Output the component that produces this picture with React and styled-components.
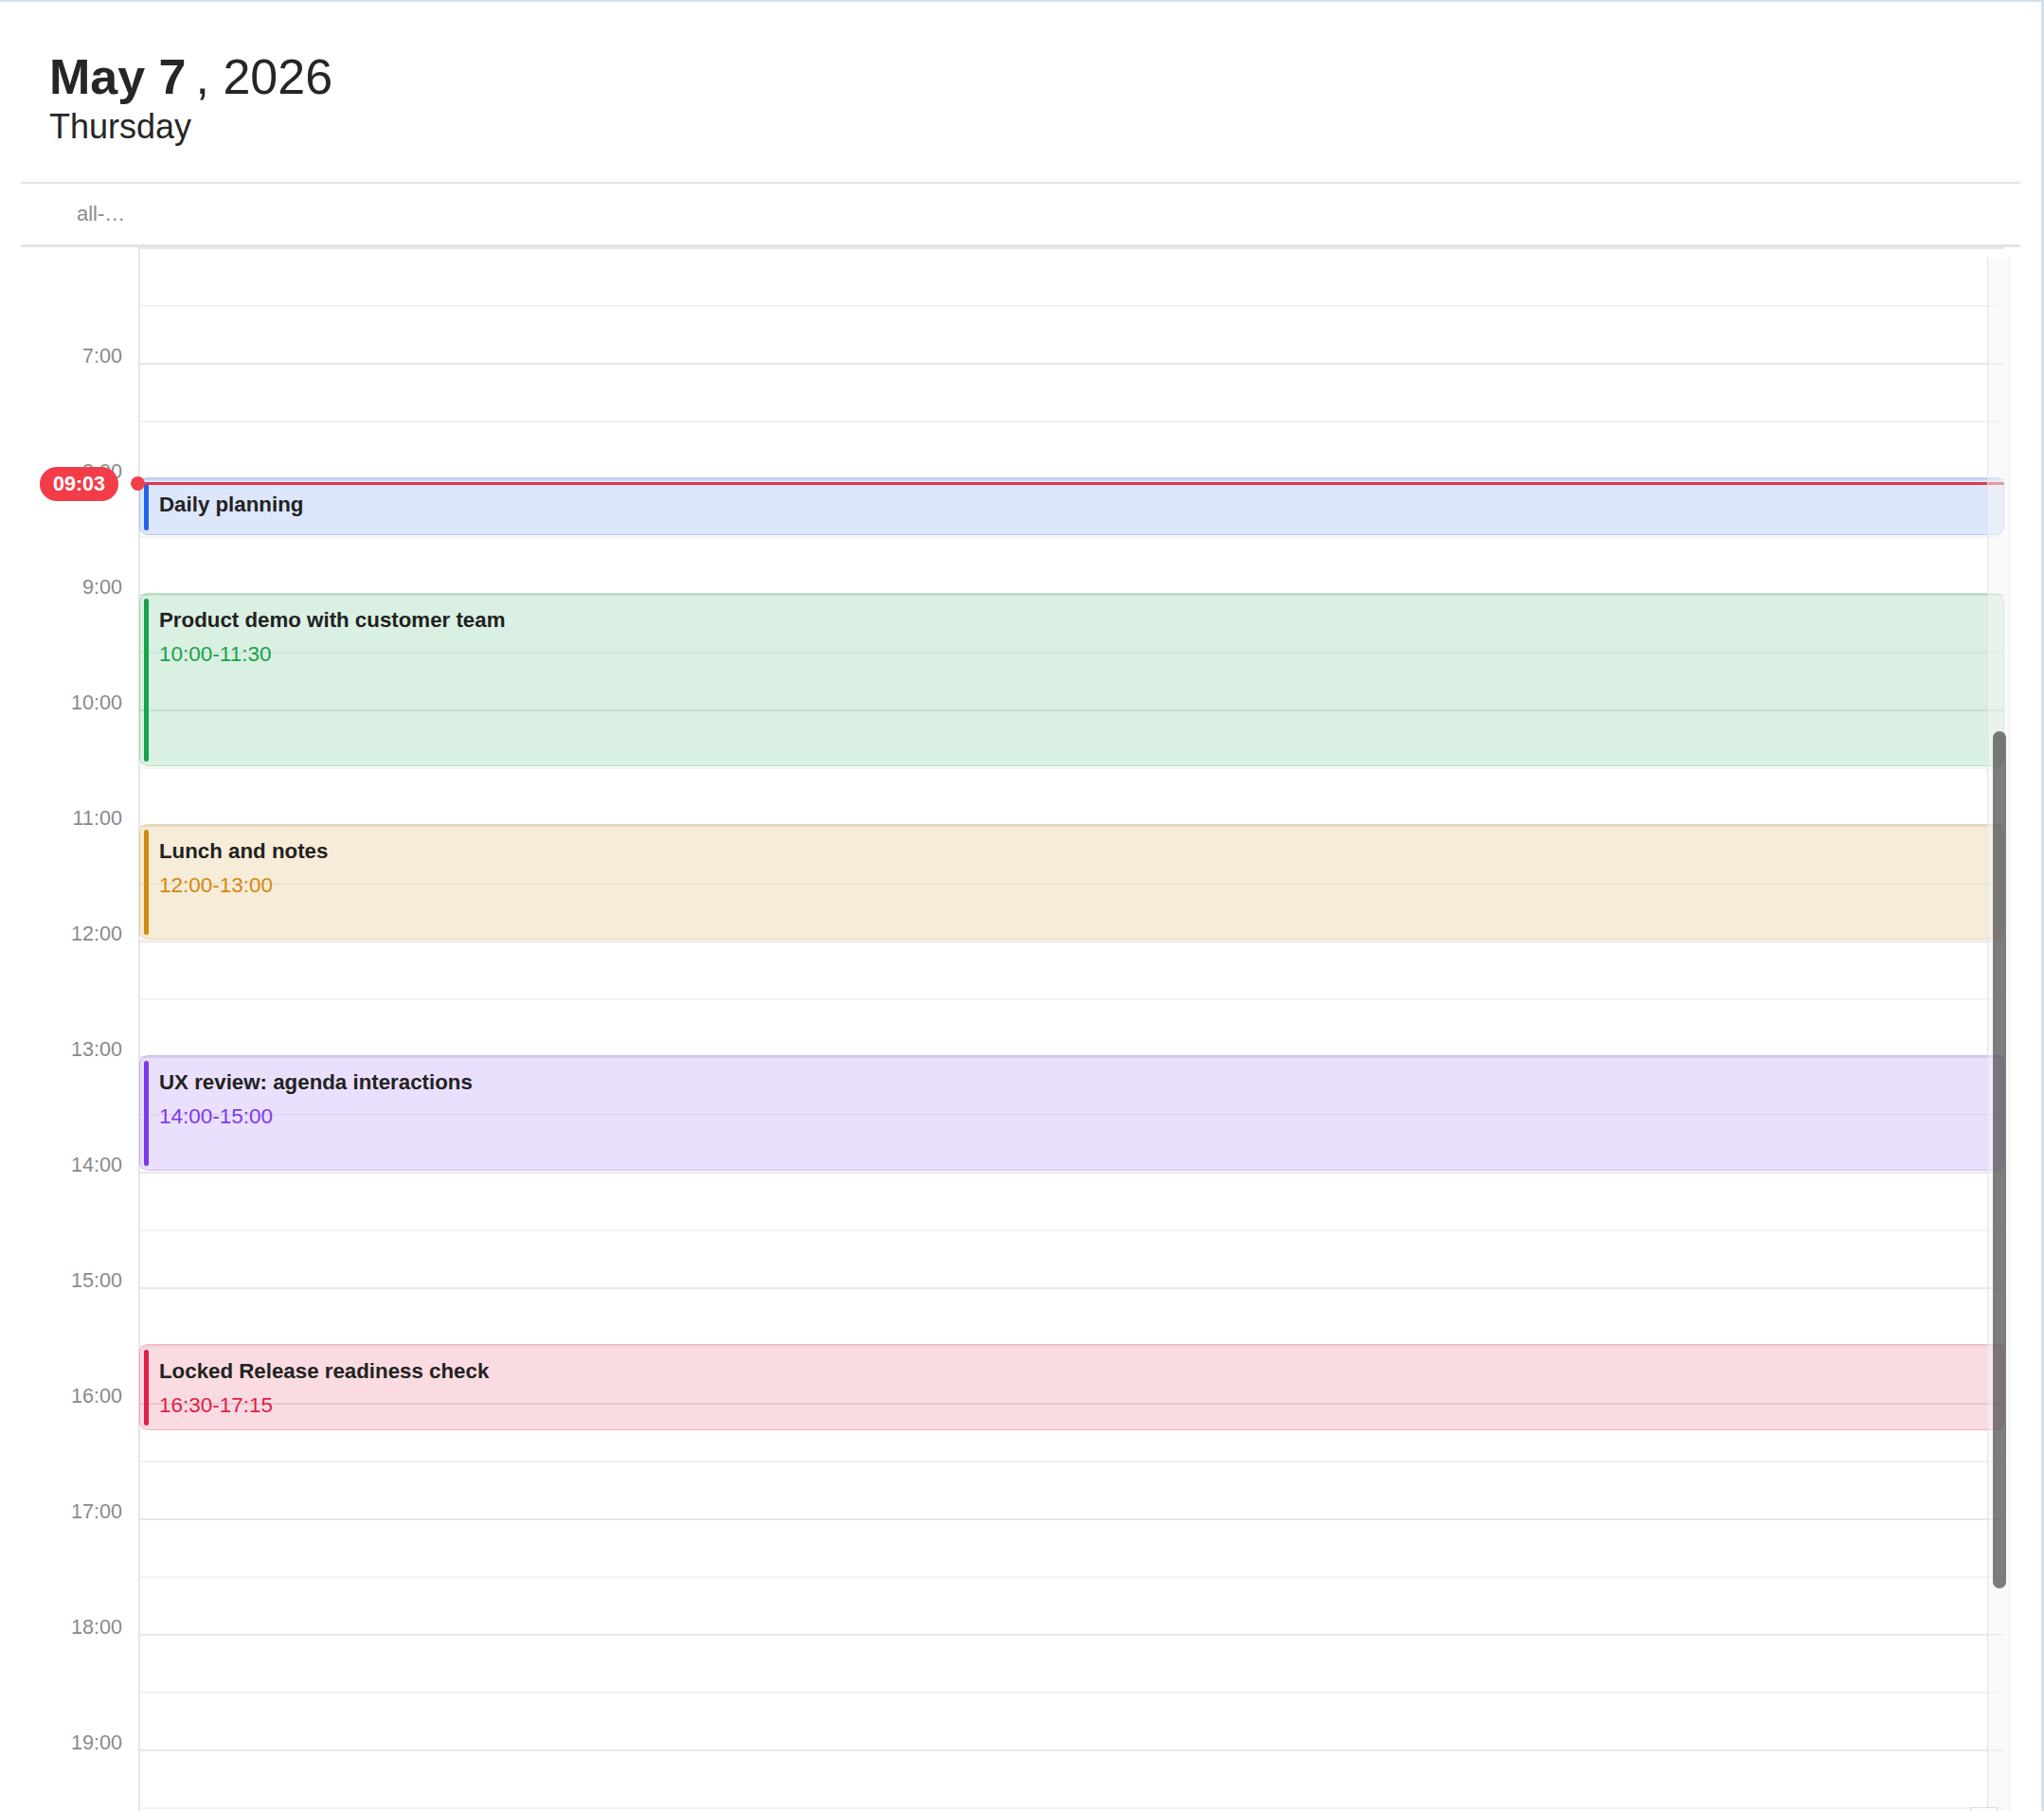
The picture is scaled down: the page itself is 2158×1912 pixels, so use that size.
import React from 'react';
import styled, { createGlobalStyle } from 'styled-components';

const HOUR = 122;
const START_HOUR = 6;

const GlobalStyle = createGlobalStyle`
  html, body {
    margin: 0;
    padding: 0;
    background: #ffffff;
  }
  body {
    font-family: "Liberation Sans", Arial, Helvetica, sans-serif;
    color: #262626;
  }
`;

const tones = {
  blue: '37, 99, 235',
  green: '22, 163, 74',
  amber: '208, 138, 14',
  purple: '124, 58, 237',
  rose: '225, 29, 72',
};

const Page = styled.div`
  box-sizing: border-box;
  width: 100%;
  height: 1912px;
  border-top: 2px solid #d5e0ea;
  border-right: 3px solid #d5e0ea;
  padding: 0 22px;
  display: flex;
  flex-direction: column;
  overflow: hidden;
`;

const Header = styled.header`
  padding: 48px 0 36px 30px;
  border-bottom: 2px solid #e4e4e4;
`;

const DateTitle = styled.h1`
  margin: 0;
  font-size: 52px;
  line-height: 1.2;
  font-weight: 400;
  color: #262626;
`;

const Strong = styled.span`
  font-weight: 700;
  margin-right: 10px;
`;

const Weekday = styled.div`
  font-size: 36px;
  line-height: 1.2;
  color: #262626;
`;

const AllDayRow = styled.div`
  box-sizing: border-box;
  height: 67px;
  border-bottom: 3px solid #e3e3e3;
  display: flex;
  align-items: center;
  padding-left: 59px;
`;

const AllDayLabel = styled.span`
  font-size: 22px;
  color: #8c8c8c;
`;

const Body = styled.div`
  flex: 1;
  min-height: 0;
  display: flex;
  position: relative;
  overflow: hidden;
`;

const Gutter = styled.div`
  box-sizing: border-box;
  width: 124px;
  flex-shrink: 0;
  padding-top: 4px;
`;

const HourLabel = styled.div`
  box-sizing: border-box;
  height: ${HOUR}px;
  display: flex;
  align-items: flex-end;
  justify-content: flex-end;
  padding-right: 17px;
  font-size: 21.6px;
  line-height: 1;
  color: #8a8a8a;
`;

const DayColumn = styled.div`
  flex: 1;
  position: relative;
  margin-right: 17px;
  border-left: 2px solid #e6e6e6;
`;

const Slot = styled.div`
  box-sizing: border-box;
  height: ${HOUR / 2}px;
  border-top: 2px solid ${(p) => (p.$hour ? '#e8e8e8' : '#f3f3f3')};
`;

const EventCard = styled.div`
  position: absolute;
  left: -1px;
  right: 0;
  box-sizing: border-box;
  border: 1.5px solid rgba(${(p) => p.$tone}, 0.22);
  background: rgba(${(p) => p.$tone}, 0.16);
  border-radius: 9px;
  padding: 14px 16px 0 20px;
  overflow: hidden;
`;

const EventBar = styled.div`
  position: absolute;
  left: 4px;
  top: 5px;
  bottom: 4px;
  width: 5px;
  border-radius: 3px;
  background: rgb(${(p) => p.$tone});
`;

const EventTitle = styled.div`
  font-size: 22.3px;
  line-height: 27px;
  font-weight: 700;
  color: #222222;
  white-space: nowrap;
`;

const EventTime = styled.div`
  margin-top: 9px;
  font-size: 22.5px;
  line-height: 27px;
  color: rgb(${(p) => p.$tone});
`;

const NowLine = styled.div`
  position: absolute;
  left: 0;
  right: 0;
  height: 3px;
  background: #dc3a52;
  z-index: 2;
`;

const NowDot = styled.div`
  position: absolute;
  left: 116px;
  width: 15px;
  height: 15px;
  border-radius: 50%;
  background: #f43f4a;
  z-index: 3;
`;

const NowBadge = styled.div`
  position: absolute;
  left: 20px;
  height: 36px;
  padding: 0 14px;
  border-radius: 18px;
  background: #f23d49;
  color: #ffffff;
  font-size: 21.5px;
  font-weight: 700;
  line-height: 36px;
  z-index: 3;
`;

const ScrollTrack = styled.div`
  position: absolute;
  top: 11px;
  bottom: 0;
  right: 11px;
  width: 24px;
  box-sizing: border-box;
  border-left: 1px solid #e2e2e2;
  border-right: 1px solid #ececec;
  background: rgba(246, 246, 246, 0.5);
  z-index: 4;
`;

const ScrollThumb = styled.div`
  position: absolute;
  left: 5px;
  width: 14px;
  top: 500px;
  height: 905px;
  border-radius: 7px;
  background: rgba(0, 0, 0, 0.5);
`;

const CornerBox = styled.div`
  position: absolute;
  right: 24px;
  bottom: -20px;
  width: 29px;
  height: 24px;
  box-sizing: border-box;
  border: 1px solid #dcdcdc;
  background: #ffffff;
  z-index: 5;
`;

const events = [
  { title: 'Daily planning', start: 8, end: 8.5, tone: tones.blue },
  { title: 'Product demo with customer team', time: '10:00-11:30', start: 9, end: 10.5, tone: tones.green },
  { title: 'Lunch and notes', time: '12:00-13:00', start: 11, end: 12, tone: tones.amber },
  { title: 'UX review: agenda interactions', time: '14:00-15:00', start: 13, end: 14, tone: tones.purple },
  { title: 'Locked Release readiness check', time: '16:30-17:15', start: 15.5, end: 16.25, tone: tones.rose },
];

// the now marker sits at 8:03 on the grid while reading 09:03
const nowPos = (8 + 3 / 60 - START_HOUR) * HOUR;

const hours = [];
for (let h = START_HOUR + 1; h < 22; h++) hours.push(h);

const slots = [];
for (let i = 0; i < (22 - START_HOUR) * 2; i++) slots.push(i);

export default function App() {
  return (
    <>
      <GlobalStyle />
      <Page>
        <Header>
          <DateTitle>
            <Strong>May 7</Strong>, 2026
          </DateTitle>
          <Weekday>Thursday</Weekday>
        </Header>

        <AllDayRow>
          <AllDayLabel>all-…</AllDayLabel>
        </AllDayRow>

        <Body>
          <Gutter>
            {hours.map((h) => (
              <HourLabel key={h}>{h}:00</HourLabel>
            ))}
          </Gutter>

          <DayColumn>
            {slots.map((i) => (
              <Slot key={i} $hour={i % 2 === 0} />
            ))}

            {events.map((ev) => (
              <EventCard
                key={ev.title}
                $tone={ev.tone}
                style={{
                  top: (ev.start - START_HOUR) * HOUR - 1,
                  height: (ev.end - ev.start) * HOUR,
                }}
              >
                <EventBar $tone={ev.tone} />
                <EventTitle>{ev.title}</EventTitle>
                {ev.time && <EventTime $tone={ev.tone}>{ev.time}</EventTime>}
              </EventCard>
            ))}

            <NowLine style={{ top: nowPos - 1.5 }} />
          </DayColumn>

          <NowDot style={{ top: nowPos - 8 }} />
          <NowBadge style={{ top: nowPos - 18 }}>09:03</NowBadge>

          <ScrollTrack>
            <ScrollThumb />
          </ScrollTrack>
          <CornerBox />
        </Body>
      </Page>
    </>
  );
}
